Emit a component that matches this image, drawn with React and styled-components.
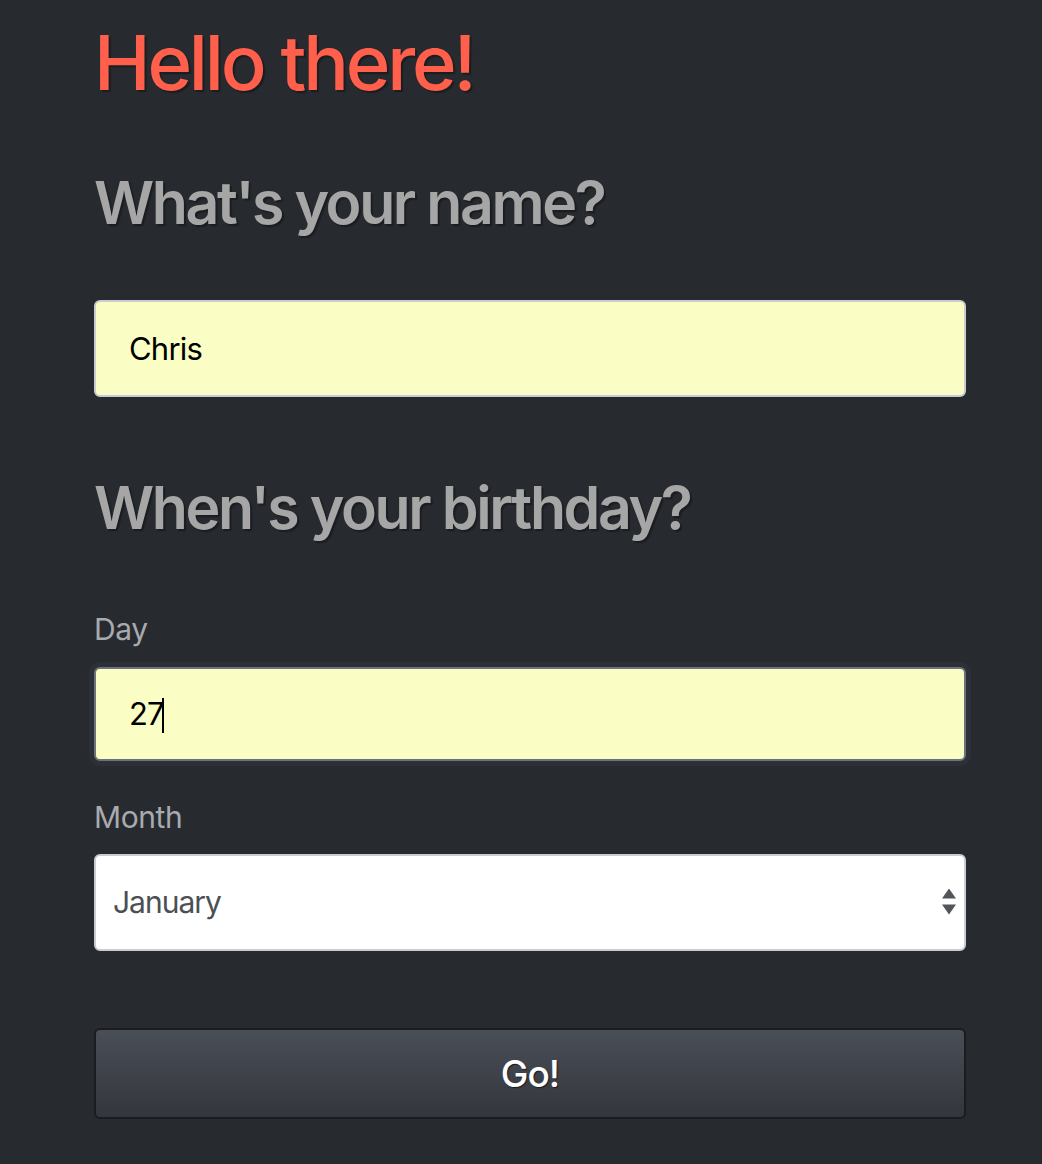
import React from "react";
import styled, { createGlobalStyle } from "styled-components";

const Global = createGlobalStyle`
  html, body {
    margin: 0;
    padding: 0;
    background: #272a2f;
  }
  body {
    font-family: Inter, "Noto Sans", "Liberation Sans", sans-serif;
  }
`;

const Page = styled.main`
  padding: 17px 76px 40px 94px;
  display: flex;
  flex-direction: column;
`;

const Title = styled.h1`
  margin: 0;
  font-size: 76px;
  line-height: 1.2;
  font-weight: 500;
  color: #ff5f4b;
  letter-spacing: -3.2px;
  text-shadow: 2px 2px 1px #1b1d21;
`;

const Heading = styled.h2`
  margin: ${(p) => p.$top}px 0 0;
  font-size: 59px;
  line-height: 1.2;
  font-weight: 600;
  color: #a6a6a6;
  letter-spacing: -2.4px;
  text-shadow: 2px 2px 1px #1b1d21;
`;

const Label = styled.label`
  display: block;
  margin: ${(p) => p.$top}px 0 0;
  font-size: 30px;
  line-height: 1.2;
  font-weight: 400;
  letter-spacing: -0.4px;
  color: #a7aaae;
`;

const FieldWrap = styled.div`
  position: relative;
  margin: ${(p) => p.$top}px 0 0;
`;

const Field = styled.input`
  box-sizing: border-box;
  display: block;
  width: 100%;
  height: ${(p) => p.$h}px;
  margin: 0;
  padding: 0 20px 0 33px;
  background: #fafec4;
  border: 2px solid ${(p) => (p.$focused ? "#6b747c" : "#c9ccd1")};
  box-shadow: ${(p) => (p.$focused ? "0 0 0 5px #2d3036" : "none")};
  border-radius: 6px;
  font-family: inherit;
  font-size: 31px;
  letter-spacing: -0.8px;
  color: #000;
  caret-color: #000;
  outline: none;
`;

const Caret = styled.span`
  position: absolute;
  left: 68px;
  top: 31px;
  width: 2px;
  height: 35px;
  background: #000;
  pointer-events: none;
`;

const SelectWrap = styled.div`
  position: relative;
  margin-top: 19px;
`;

const Select = styled.select`
  box-sizing: border-box;
  display: block;
  width: 100%;
  height: 97px;
  padding: 0 40px 0 17px;
  appearance: none;
  -webkit-appearance: none;
  background: #fff;
  border: 2px solid #c9ccd1;
  border-radius: 6px;
  font-family: inherit;
  font-size: 30px;
  letter-spacing: -1px;
  color: #4c4f54;
  outline: none;
`;

const Arrows = styled.svg`
  position: absolute;
  right: 10px;
  top: 50%;
  transform: translateY(-50%);
  pointer-events: none;
`;

const Button = styled.button`
  box-sizing: border-box;
  display: block;
  width: 100%;
  height: 91px;
  margin-top: 77px;
  background: linear-gradient(#4a4e57, #33363c);
  border: 2px solid #1b1c1f;
  border-radius: 6px;
  color: #fff;
  font-family: inherit;
  font-size: 37px;
  font-weight: 500;
  letter-spacing: -1px;
  text-shadow: 1px 1px 1px #1b1c1f;
  cursor: pointer;
`;

const months = ["January","February","March","April","May","June","July","August","September","October","November","December"];

export default function App() {
  return (
    <>
      <Global />
      <Page>
        <Title>Hello there!</Title>
        <Heading $top={60}>What's your name?</Heading>
        <FieldWrap $top={61}>
          <Field $h={97} defaultValue="Chris" />
        </FieldWrap>
        <Heading $top={76}>When's your birthday?</Heading>
        <Label $top={67} htmlFor="day">Day</Label>
        <FieldWrap $top={20}>
          <Field id="day" $focused $h={94} defaultValue="27" />
          <Caret />
        </FieldWrap>
        <Label $top={38} htmlFor="month">Month</Label>
        <SelectWrap>
          <Select id="month" defaultValue="January">
            {months.map((m) => (
              <option key={m}>{m}</option>
            ))}
          </Select>
          <Arrows width="14" height="27" viewBox="0 0 14 27">
            <polygon points="7,0 14,10 0,10" fill="#52555a" />
            <polygon points="0,16 14,16 7,26" fill="#52555a" />
          </Arrows>
        </SelectWrap>
        <Button>Go!</Button>
      </Page>
    </>
  );
}
